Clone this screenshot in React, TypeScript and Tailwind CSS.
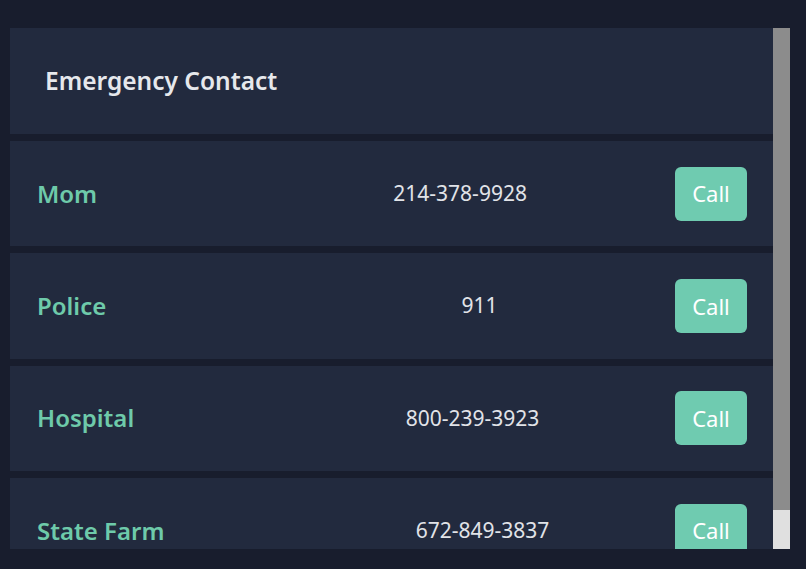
import React from "react";

type Contact = {
  name: string;
  phone: string;
};

const contacts: Contact[] = [
  { name: "Mom", phone: "214-378-9928" },
  { name: "Police", phone: "911" },
  { name: "Hospital", phone: "800-239-3923" },
  { name: "State Farm", phone: "672-849-3837" },
];

const ContactRow: React.FC<{ contact: Contact }> = ({ contact }) => {
  return (
    <div className="h-[105.4px] shrink-0 bg-[#222a3e] pl-[27px] pr-[26px] flex items-center justify-between">
      <span className="text-[24px] font-semibold text-[#6ecaaa]">
        {contact.name}
      </span>
      <span />
      <span className="text-[21px] text-[#e1e3e8]">{contact.phone}</span>
      <button className="w-[72px] h-[54px] rounded-[6px] bg-[#6fcbb0] text-white text-[22px] flex items-center justify-center">
        Call
      </button>
    </div>
  );
};

const App: React.FC = () => {
  return (
    <div
      className="w-[806px] h-[569px] bg-[#181d2d] pt-[28px] pl-[10px]"
      style={{ fontFamily: '"Noto Sans", "Open Sans", sans-serif' }}
    >
      <div className="w-[780px] h-[521px] flex">
        <div className="flex-1 overflow-hidden">
          <div className="flex flex-col gap-[7px] pb-[8px]">
            <div className="h-[106px] shrink-0 bg-[#222a3e] px-[35px] flex items-center">
              <h1 className="text-[24.5px] font-semibold text-[#e6e8ec]">
                Emergency Contact
              </h1>
            </div>
            {contacts.map((c) => (
              <ContactRow key={c.name} contact={c} />
            ))}
          </div>
        </div>
        {/* scrollbar */}
        <div className="w-[17px] bg-[#e0e0e0] flex flex-col">
          <div className="h-[482px] bg-[#8c8c8c]" />
        </div>
      </div>
    </div>
  );
};

export default App;
